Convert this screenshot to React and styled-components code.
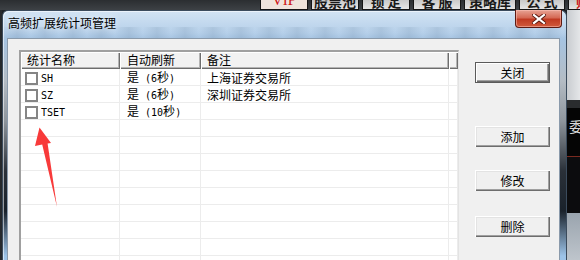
import React from 'react';
import styled, { createGlobalStyle } from 'styled-components';

const GlobalStyle = createGlobalStyle`
  html, body {
    margin: 0;
    padding: 0;
    background: #1d2125;
  }
  body {
    font-family: "Noto Sans CJK SC", "Liberation Sans", sans-serif;
    font-size: 12px;
    color: #000;
  }
`;

const tabs = [
  { label: 'VIP', w: 48, vip: true },
  { label: '股票池', w: 48 },
  { label: '锁 定', w: 48 },
  { label: '客 服', w: 48 },
  { label: '策略库', w: 52 },
  { label: '公 式', w: 46 },
  { label: '购', w: 30, red: true },
];

const rows = [
  { name: 'SH', refresh: '是 (6秒)', note: '上海证券交易所' },
  { name: 'SZ', refresh: '是 (6秒)', note: '深圳证券交易所' },
  { name: 'TSET', refresh: '是 (10秒)', note: '' },
];

const EMPTY_ROWS = 9;

const buttons = [
  { label: '关闭', gap: 12, isDefault: true },
  { label: '添加', gap: 43 },
  { label: '修改', gap: 23 },
  { label: '删除', gap: 25 },
];

// ascii runs get the narrow mono face, like the old SimSun half-width glyphs
const mixed = (s) =>
  s
    .split(/([\x00-\x7f]+)/)
    .filter(Boolean)
    .map((part, i) =>
      /^[\x00-\x7f]+$/.test(part) ? <Latin key={i}>{part}</Latin> : part
    );

const App = () => {
  return (
    <>
      <GlobalStyle />
      <Page>
        <AppBar>
          {tabs.map((t) => (
            <Tab key={t.label} $w={t.w} $vip={t.vip} $red={t.red || t.vip}>
              <span>{t.label}</span>
            </Tab>
          ))}
        </AppBar>

        <Desk>
          <Gutter />
          <Window>
            <TitleBar>
              <Title>高频扩展统计项管理</Title>
              <CloseX>
                <svg width="14" height="10" viewBox="0 0 14 10">
                  <path
                    d="M2 1 L12 9 M12 1 L2 9"
                    stroke="#5a1a10"
                    strokeWidth="4"
                    strokeLinecap="square"
                  />
                  <path
                    d="M2 1 L12 9 M12 1 L2 9"
                    stroke="#fff"
                    strokeWidth="2.2"
                    strokeLinecap="square"
                  />
                </svg>
              </CloseX>
            </TitleBar>

            <FrameRow>
              <FrameSide $w={4} />
              <Client>
                <List>
                  <HeaderRow>
                    <HeadCell $pad={6}>统计名称</HeadCell>
                    <HeadCell $pad={7}>自动刷新</HeadCell>
                    <HeadCell $pad={6}>备注</HeadCell>
                    <HeadCell />
                  </HeaderRow>
                  {rows.map((r) => (
                    <Row key={r.name}>
                      <Cell $pad={4}>
                        <Check />
                        <CellText>{mixed(r.name)}</CellText>
                      </Cell>
                      <Cell $pad={7}>
                        <CellText>{mixed(r.refresh)}</CellText>
                      </Cell>
                      <Cell $pad={6}>
                        <CellText>{r.note}</CellText>
                      </Cell>
                      <Cell />
                    </Row>
                  ))}
                  {Array.from({ length: EMPTY_ROWS }).map((_, i) => (
                    <Row key={`e${i}`}>
                      <Cell />
                      <Cell />
                      <Cell />
                      <Cell />
                    </Row>
                  ))}
                </List>

                <ButtonColumn>
                  {buttons.map((b) => (
                    <Button key={b.label} $gap={b.gap} $default={b.isDefault}>
                      {b.label}
                    </Button>
                  ))}
                </ButtonColumn>
              </Client>
              <FrameSide $w={6} />
            </FrameRow>
          </Window>

          <RightStrip>
            <StripBlock $h={90} $bg="linear-gradient(90deg, #c9ccd0, #e4e6e8)" />
            <StripBlock $h={8} $bg="#2a2c2e" />
            <StripBlock $h={48} $bg="#050505">
              <StripText>委</StripText>
            </StripBlock>
            <StripBlock $h={1} $bg="#7a2a20" />
            <StripBlock $h={56} $bg="#0c0c0e" />
            <StripBlock $h={60} $bg="linear-gradient(#9aa4ae, #c8ced4)" />
          </RightStrip>
        </Desk>

        <Arrow width="30" height="90" viewBox="0 0 30 90">
          <polygon
            points="9.5,7.5 21,23 17.6,23.4 27,87 12.2,24.6 5,26"
            fill="#f83a3a"
          />
        </Arrow>
      </Page>
    </>
  );
};

export default App;

const Page = styled.div`
  position: relative;
  width: 580px;
  height: 260px;
  overflow: hidden;
  display: flex;
  flex-direction: column;
  background: #1d2125;
`;

const AppBar = styled.div`
  flex: none;
  height: 10px;
  display: flex;
  gap: 3px;
  padding-left: 260px;
  overflow: hidden;
  background: linear-gradient(#2b2e31, #3d4145);
`;

const Tab = styled.div`
  flex: none;
  box-sizing: border-box;
  width: ${(p) => p.$w}px;
  height: 10px;
  overflow: hidden;
  border: 1px solid #151515;
  border-top: none;
  background: ${(p) => (p.$vip ? '#efe4dc' : 'linear-gradient(#c9c9c9, #e6e6e6)')};
  color: ${(p) => (p.$red ? '#cc1414' : '#1a1a1a')};
  font: ${(p) => (p.$vip ? '15px/16px "Liberation Serif", serif' : 'bold 14px/14px "Noto Sans CJK SC", sans-serif')};
  text-align: center;
  white-space: nowrap;

  span {
    display: block;
    margin-top: ${(p) => (p.$vip ? '-8px' : '-6px')};
  }
`;

const Desk = styled.div`
  flex: 1;
  min-height: 0;
  display: flex;
`;

const Gutter = styled.div`
  flex: none;
  width: 2px;
  background: #26292c;
`;

const Window = styled.div`
  flex: none;
  width: 565px;
  box-sizing: border-box;
  display: flex;
  flex-direction: column;
  border: 1px solid #3b4b5c;
  border-bottom: none;
  border-radius: 6px 6px 0 0;
  background: linear-gradient(
    180deg,
    #d2e3f3 0px,
    #b6d0ea 22px,
    #a6c4e2 28px,
    #b4bcc4 70px,
    #8e959c 110px,
    #2a3038 160px,
    #1a222b 200px,
    #9cc3e8 245px
  );
  box-shadow: inset 1px 1px rgba(255, 255, 255, 0.55);
`;

const TitleBar = styled.div`
  flex: none;
  height: 27px;
  display: flex;
  align-items: flex-start;
  justify-content: space-between;
  padding-left: 5px;
  background: repeating-linear-gradient(
      90deg,
      rgba(70, 100, 130, 0) 0px,
      rgba(70, 100, 130, 0.14) 14px,
      rgba(70, 100, 130, 0) 28px
    )
    0 16px / 100% 11px no-repeat;
`;

const Title = styled.div`
  margin-top: 4px;
  font-size: 12px;
  line-height: 16px;
  color: #000;
  text-shadow: 0 0 6px rgba(255, 255, 255, 0.9);
`;

const CloseX = styled.div`
  width: 47px;
  height: 18px;
  margin-top: -1px;
  margin-right: 4px;
  box-sizing: border-box;
  display: flex;
  align-items: center;
  justify-content: center;
  border: 1px solid #5d1a12;
  border-top: none;
  border-radius: 0 0 4px 4px;
  background: linear-gradient(#e7a394 0%, #d56a55 45%, #c03a22 55%, #d05a3c 100%);
  box-shadow: inset 0 0 0 1px rgba(255, 200, 190, 0.5);
`;

const FrameRow = styled.div`
  flex: 1;
  min-height: 0;
  display: flex;
`;

const FrameSide = styled.div`
  flex: none;
  width: ${(p) => p.$w}px;
`;

const Client = styled.div`
  flex: none;
  width: 553px;
  box-sizing: border-box;
  display: flex;
  align-items: flex-start;
  padding: 11px 0 0 11px;
  background: #f0f0f0;
  border: 1px solid #8a9aab;
  border-bottom: none;
`;

const List = styled.div`
  flex: none;
  width: 440px;
  box-sizing: border-box;
  background: #fff;
  border-top: 2px solid #a0a0a0;
  border-left: 2px solid #a0a0a0;
  border-right: 1px solid #e3e3e3;
`;

const HeaderRow = styled.div`
  display: grid;
  grid-template-columns: 99px 81px 248px 1fr;
  height: 17px;
`;

const HeadCell = styled.div`
  box-sizing: border-box;
  height: 17px;
  padding-left: ${(p) => p.$pad || 0}px;
  line-height: 16px;
  font-size: 12px;
  white-space: nowrap;
  background: #f2f2f2;
  box-shadow: inset 1px 1px #ffffff, inset -1px -1px #6d6d6d, inset -2px -2px #b4b4b4;
`;

const Row = styled.div`
  display: grid;
  grid-template-columns: 99px 81px 248px 1fr;
  height: 17px;
  box-sizing: border-box;
  border-bottom: 1px solid #ececec;
`;

const Cell = styled.div`
  box-sizing: border-box;
  display: flex;
  align-items: center;
  gap: 3px;
  padding-left: ${(p) => p.$pad || 0}px;
  border-right: 1px solid #ececec;
`;

const CellText = styled.span`
  font-size: 12px;
  line-height: 16px;
  white-space: nowrap;
`;

const Latin = styled.span`
  font-family: "DejaVu Sans Mono", "Liberation Mono", monospace;
  font-size: 10px;
  white-space: pre;
`;

const Check = styled.span`
  flex: none;
  width: 13px;
  height: 13px;
  box-sizing: border-box;
  border: 2px solid #858585;
  background: #fff;
`;

const ButtonColumn = styled.div`
  display: flex;
  flex-direction: column;
  margin-left: 16px;
`;

const Button = styled.button`
  width: 75px;
  height: 21px;
  margin-top: ${(p) => p.$gap}px;
  padding: 0;
  box-sizing: border-box;
  font-family: "Noto Sans CJK SC", sans-serif;
  font-size: 12px;
  line-height: 16px;
  color: #000;
  background: #f0f0f0;
  border: ${(p) => (p.$default ? '1px solid #5a5a5a' : 'none')};
  box-shadow: ${(p) =>
    p.$default
      ? 'inset 1px 1px #ffffff, inset -1px -1px #6d6d6d, inset -2px -2px #a0a0a0'
      : 'inset 1px 1px #ffffff, inset -1px -1px #6d6d6d, inset -2px -2px #a0a0a0, inset 2px 2px #e3e3e3'};
  cursor: default;
`;

const RightStrip = styled.div`
  flex: 1;
  display: flex;
  flex-direction: column;
  overflow: hidden;
`;

const StripBlock = styled.div`
  flex: none;
  height: ${(p) => p.$h}px;
  background: ${(p) => p.$bg};
  overflow: hidden;
`;

const StripText = styled.div`
  margin-top: 10px;
  margin-left: 2px;
  color: #d8d8d8;
  font-size: 14px;
  line-height: 16px;
`;

const Arrow = styled.svg`
  position: absolute;
  left: 30px;
  top: 120px;
  pointer-events: none;
`;
